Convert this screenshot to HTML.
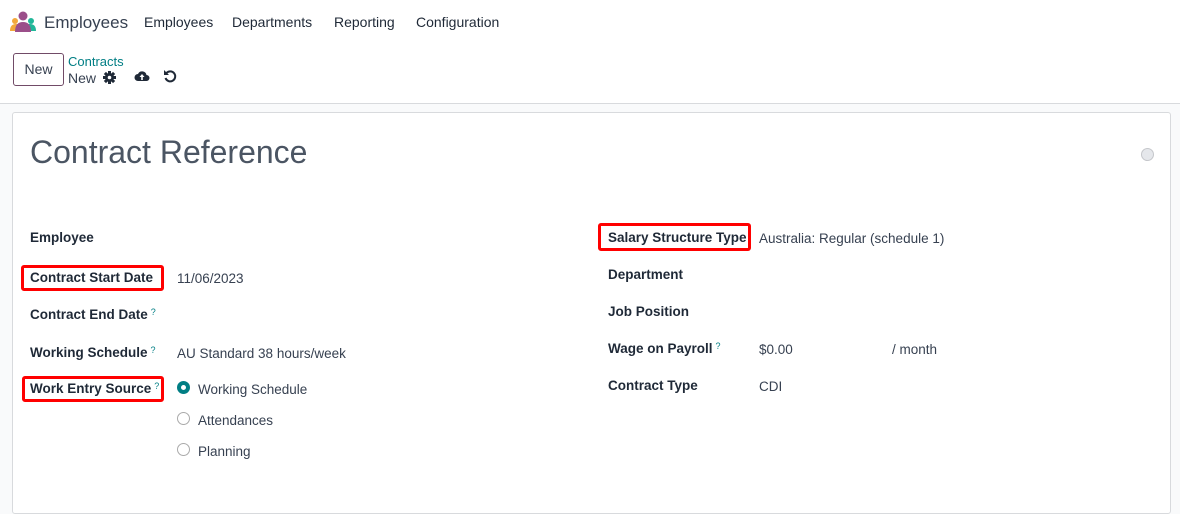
<!DOCTYPE html>
<html><head><style>
body{margin:0;width:1180px;height:480px;overflow:hidden;background:#f9fafb;font-family:"Liberation Sans",sans-serif;color:#374151;position:relative}
.top{position:absolute;left:0;top:0;width:1180px;height:103px;background:#fff;border-bottom:1px solid #d8dadd}
.a{position:absolute;white-space:nowrap}
.nav{font-size:14px;color:#1f2937;top:14px}
.card{position:absolute;left:12px;top:112px;width:1157px;height:400px;background:#fff;border:1px solid #d8dadd;border-radius:3px}
.lbl{font-size:13.5px;font-weight:bold;color:#1f2937}
.val{font-size:13.5px;color:#374151}
.q{font-size:9px;color:#017e84;vertical-align:top;margin-left:3px;font-weight:normal}
.red{position:absolute;border:3px solid #f00;border-radius:3px}
.rad{position:absolute;width:11px;height:11px;border:1px solid #aaa;border-radius:50%;background:#fff}
</style></head><body>
<div class="top">
<svg class="a" style="left:9px;top:11px" width="28" height="22" viewBox="0 0 28 22"><circle cx="14" cy="5" r="4.5" fill="#9b4f8a"/><circle cx="6" cy="10" r="3" fill="#f3a83b"/><circle cx="22" cy="10" r="3" fill="#21b799"/><path d="M1 20q0-7 6-7h4v7z" fill="#f3a83b"/><path d="M27 20q0-7-6-7h-4v7z" fill="#21b799"/><path d="M6 21q0-10 8-10t8 10z" fill="#9b4f8a"/></svg>
<div class="a" style="left:44px;top:13px;font-size:17px;color:#374151">Employees</div>
<div class="a nav" style="left:144px">Employees</div>
<div class="a nav" style="left:232px">Departments</div>
<div class="a nav" style="left:334px">Reporting</div>
<div class="a nav" style="left:416px">Configuration</div>
<div class="a" style="left:13px;top:53px;width:51px;height:33px;border:1px solid #714b67;border-radius:3px;box-sizing:border-box;font-size:14px;color:#374151;text-align:center;line-height:31px">New</div>
<div class="a" style="left:68px;top:54px;font-size:13px;color:#017e84">Contracts</div>
<div class="a" style="left:68px;top:70px;font-size:14px;color:#374151">New</div>
<svg class="a" style="left:103px;top:71px" width="13" height="13" viewBox="0 0 13 13"><g fill="#1f2937"><circle cx="6.5" cy="6.5" r="4.5"/><rect x="5" y="0" width="3" height="13"/><rect x="0" y="5" width="13" height="3"/><rect x="5" y="0" width="3" height="13" transform="rotate(45 6.5 6.5)"/><rect x="5" y="0" width="3" height="13" transform="rotate(-45 6.5 6.5)"/></g><circle cx="6.5" cy="6.5" r="1.8" fill="#fff"/></svg>
<svg class="a" style="left:134px;top:70px" width="16" height="12" viewBox="0 0 16 12"><path d="M4 11a3.5 3.5 0 0 1 0-7a4.5 4.5 0 0 1 8.5 1a3 3 0 0 1 0 6z" fill="#1f2937"/><path d="M8 4l-2.5 3h1.7v3h1.6v-3h1.7z" fill="#fff"/></svg>
<svg class="a" style="left:163px;top:69px" width="14" height="14" viewBox="0 0 14 14"><path d="M3.5 4A5 5 0 1 1 2.5 9" fill="none" stroke="#1f2937" stroke-width="2"/><path d="M1 1v5h5z" fill="#1f2937"/></svg>
</div>
<div class="card"></div>
<div class="a" style="left:30px;top:134px;font-size:32px;color:#4b5563">Contract Reference</div>
<div class="a" style="left:1141px;top:148px;width:11px;height:11px;border-radius:50%;background:#e5e7eb;border:1px solid #c5c7cb"></div>
<div class="a lbl" style="left:30px;top:230px">Employee</div>
<div class="a lbl" style="left:30px;top:270px">Contract Start Date</div>
<div class="a val" style="left:177px;top:271px">11/06/2023</div>
<div class="a lbl" style="left:30px;top:307px">Contract End Date<span class="q">?</span></div>
<div class="a lbl" style="left:30px;top:345px">Working Schedule<span class="q">?</span></div>
<div class="a val" style="left:177px;top:346px">AU Standard 38 hours/week</div>
<div class="a lbl" style="left:30px;top:381px">Work Entry Source<span class="q">?</span></div>
<div class="rad" style="left:177px;top:381px;border:4px solid #017e84;width:5px;height:5px"></div>
<div class="a val" style="left:198px;top:382px">Working Schedule</div>
<div class="rad" style="left:177px;top:412px"></div>
<div class="a val" style="left:198px;top:413px">Attendances</div>
<div class="rad" style="left:177px;top:443px"></div>
<div class="a val" style="left:198px;top:444px">Planning</div>
<div class="a lbl" style="left:608px;top:230px">Salary Structure Type</div>
<div class="a val" style="left:759px;top:231px">Australia: Regular (schedule 1)</div>
<div class="a lbl" style="left:608px;top:267px">Department</div>
<div class="a lbl" style="left:608px;top:304px">Job Position</div>
<div class="a lbl" style="left:608px;top:341px">Wage on Payroll<span class="q">?</span></div>
<div class="a val" style="left:759px;top:342px">$0.00</div>
<div class="a val" style="left:892px;top:342px">/ month</div>
<div class="a lbl" style="left:608px;top:378px">Contract Type</div>
<div class="a val" style="left:759px;top:379px">CDI</div>
<div class="red" style="left:21px;top:265px;width:137px;height:20px"></div>
<div class="red" style="left:22px;top:376px;width:136px;height:20px"></div>
<div class="red" style="left:598px;top:223px;width:147px;height:22px"></div>
</body></html>
